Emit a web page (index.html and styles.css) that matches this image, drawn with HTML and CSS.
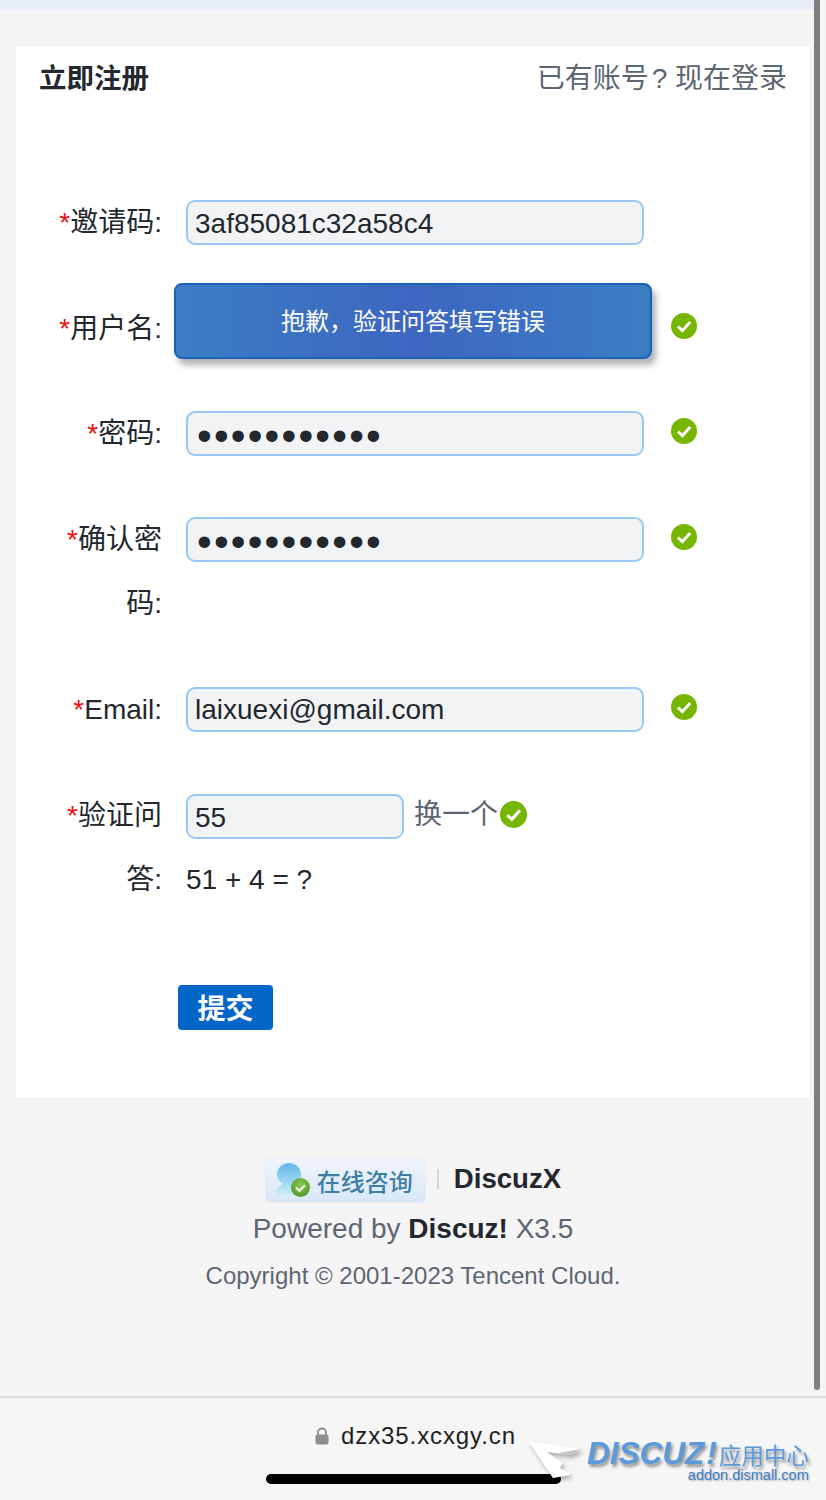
FILE: index.html
```html
<!DOCTYPE html>
<html lang="zh">
<head>
    <meta charset="utf-8">
    <title>立即注册</title>
    <link rel="stylesheet" href="styles.css">
</head>
<body>
    <div class="topbar"></div>
    <div class="scrollbar"></div>

    <form class="card">
        <div class="card-head">
            <h2 class="card-title">立即注册</h2>
            <a class="card-link">已有账号<span class="qm">?</span> 现在登录</a>
        </div>

        <div class="row">
            <label class="row-label"><span class="req">*</span>邀请码:</label>
            <input class="txt" type="text" value="3af85081c32a58c4">
        </div>
        <div class="row">
            <label class="row-label"><span class="req">*</span>用户名:</label>
            <input class="txt" type="text">
            <svg class="ok" viewBox="0 0 26 26"><circle cx="13" cy="13" r="13" fill="#76b500"/><path d="M7 13.5l4.4 4.2L19.2 9" fill="none" stroke="#fff" stroke-width="3"/></svg>
        </div>
        <div class="row">
            <label class="row-label"><span class="req">*</span>密码:</label>
            <input class="txt pw" type="password" value="12345678901">
            <svg class="ok" viewBox="0 0 26 26"><circle cx="13" cy="13" r="13" fill="#76b500"/><path d="M7 13.5l4.4 4.2L19.2 9" fill="none" stroke="#fff" stroke-width="3"/></svg>
        </div>
        <div class="row">
            <label class="row-label"><span class="req">*</span>确认密码:</label>
            <input class="txt pw" type="password" value="12345678901">
            <svg class="ok" viewBox="0 0 26 26"><circle cx="13" cy="13" r="13" fill="#76b500"/><path d="M7 13.5l4.4 4.2L19.2 9" fill="none" stroke="#fff" stroke-width="3"/></svg>
        </div>
        <div class="row">
            <label class="row-label"><span class="req">*</span>Email:</label>
            <input class="txt" type="text" value="laixuexi@gmail.com">
            <svg class="ok" viewBox="0 0 26 26"><circle cx="13" cy="13" r="13" fill="#76b500"/><path d="M7 13.5l4.4 4.2L19.2 9" fill="none" stroke="#fff" stroke-width="3"/></svg>
        </div>
        <div class="row row-captcha">
            <label class="row-label"><span class="req">*</span>验证问答:</label>
            <div class="captcha">
                <div class="captcha-line">
                    <input class="txt txt-short" type="text" value="55">
                    <a class="swap">换一个</a>
                    <svg class="ok ok-tight" viewBox="0 0 26 26"><circle cx="13" cy="13" r="13" fill="#76b500"/><path d="M7 13.5l4.4 4.2L19.2 9" fill="none" stroke="#fff" stroke-width="3"/></svg>
                </div>
                <div class="question">51 + 4 = ?</div>
            </div>
        </div>

        <button class="btn" type="button">提交</button>

        <div class="toast">抱歉，验证问答填写错误</div>
    </form>

    <div class="foot">
        <div class="foot-line">
            <span class="consult">
                <svg class="consult-icon" viewBox="0 0 36 36">
                    <defs>
                        <linearGradient id="head" x1="0" y1="0" x2="0" y2="1">
                            <stop offset="0" stop-color="#62b8e8"/>
                            <stop offset="0.6" stop-color="#a0daf0"/>
                            <stop offset="1" stop-color="#dbeff8"/>
                        </linearGradient>
                        <radialGradient id="tick" cx="0.5" cy="0.35" r="0.7">
                            <stop offset="0" stop-color="#8cc850"/>
                            <stop offset="1" stop-color="#4c9428"/>
                        </radialGradient>
                    </defs>
                    <path d="M14 0c7 0 12 5 12 12 0 4-2 7-4 9 4 1 8 3 10 5l-3 8H6C3 34 0 31 1 28c1-3 4-5 7-7-3-2-6-5-6-9C2 5 7 0 14 0z" fill="url(#head)"/>
                    <circle cx="25.5" cy="24.5" r="9.5" fill="url(#tick)"/>
                    <path d="M21 24.5l3.4 3.4 5.6-5.6" fill="none" stroke="#eaf6e0" stroke-width="2.2"/>
                </svg>
                <span class="consult-text">在线咨询</span>
            </span>
            <span class="foot-sep"></span>
            <b class="foot-name">DiscuzX</b>
        </div>
        <div class="powered">Powered by <b>Discuz!</b> X3.5</div>
        <div class="copy">Copyright © 2001-2023 Tencent Cloud.</div>
    </div>

    <div class="urlbar">
        <div class="url">
            <svg class="lock" viewBox="0 0 14 18"><path d="M3 8V5.5a4 4 0 0 1 8 0V8" fill="none" stroke="#8e8e92" stroke-width="1.8"/><rect x="0.5" y="7.5" width="13" height="10" rx="2" fill="#8e8e92"/></svg>
            <span>dzx35.xcxgy.cn</span>
        </div>
        <div class="home"></div>
    </div>

    <div class="mark">
        <svg class="mark-arrow" viewBox="0 0 56 40">
            <path d="M0 1l54 8-12 6-23-3 16 11-3 5 10 5v2l-17 3z" fill="#fff"/>
            <path d="M54 9L30 13l12 2z" fill="#c4c4c4"/>
        </svg>
        <div class="mark-body">
            <div class="mark-top"><span class="mark-logo">DISCUZ<i>!</i></span><span class="mark-cn">应用中心</span></div>
            <div class="mark-site">addon.dismall.com</div>
        </div>
    </div>
</body>
</html>
```

FILE: styles.css
```css
* {
    box-sizing: border-box;
}

html, body {
    margin: 0;
    padding: 0;
}

body {
    position: relative;
    width: 826px;
    height: 1500px;
    overflow: hidden;
    background-color: #f5f5f5;
    font-family: "Liberation Sans", "Noto Sans CJK SC", sans-serif;
    font-size: 28px;
    color: #23272e;
}

.topbar {
    height: 10px;
    margin-right: 12px;
    background-color: #e8eef6;
}

.scrollbar {
    position: absolute;
    top: 0;
    left: 814px;
    width: 6px;
    height: 1390px;
    border-radius: 0 0 3px 3px;
    background-color: #808080;
}

.card {
    position: relative;
    width: 794px;
    height: 1052px;
    margin: 36px 0 0 16px;
    padding: 0 23px;
    background-color: #fff;
}

.card-head {
    display: flex;
    justify-content: space-between;
    align-items: center;
    height: 60px;
    margin-bottom: 84px;
}

.card-title {
    margin: 0;
    font-size: 27.5px;
    font-weight: bold;
    color: #23272e;
}

.card-link {
    font-size: 28px;
    color: #5d6673;
}

.qm {
    margin-left: 3px;
}

.row {
    display: flex;
    align-items: flex-start;
    margin-bottom: 40.7px;
    line-height: 64px;
}

.row-captcha {
    margin-top: 41px;
}

.row-label {
    flex: none;
    width: 106px;
    margin: 0 24px 0 17px;
    padding-top: 1px;
    text-align: right;
}

.req {
    color: #f01010;
}

.txt {
    flex: none;
    width: 458px;
    height: 45px;
    margin-top: 10px;
    padding: 2px 7px 0;
    border: 2px solid #98c8f6;
    border-radius: 9px;
    outline: none;
    background-color: #f2f3f5;
    font-family: "Liberation Sans", sans-serif;
    font-size: 28px;
    color: #23272e;
}

.txt-short {
    width: 218px;
}

.pw {
    padding: 4px 0 0 9px;
    font-size: 42px;
    letter-spacing: 2.2px;
}

.ok {
    flex: none;
    width: 26px;
    height: 26px;
    margin: 17px 0 0 27px;
}

.ok-tight {
    width: 27px;
    height: 27px;
    margin: 0 0 4px 2px;
}

.captcha {
    flex: 1;
}

.captcha-line {
    display: flex;
    align-items: center;
}

.captcha-line .txt {
    margin-top: 0;
}

.swap {
    margin: 0 0 4px 10px;
    color: #5d6673;
}

.question {
    margin-top: -3px;
    color: #23272e;
}

.btn {
    display: block;
    width: 95px;
    height: 45px;
    margin: 73px 0 0 139px;
    padding: 0;
    border: none;
    border-radius: 4px;
    background-color: #0566c9;
    font-family: "Noto Sans CJK SC", sans-serif;
    font-size: 28px;
    font-weight: bold;
    color: #fff;
}

.toast {
    position: absolute;
    top: 237px;
    left: 158px;
    width: 478px;
    height: 76px;
    border: 2px solid #1a62b8;
    border-radius: 8px;
    background: linear-gradient(90deg, #3b7dc4, #3d66c0 50%, #3b7dc4);
    box-shadow: 4px 6px 6px rgba(0, 0, 0, 0.3);
    font-size: 24px;
    line-height: 74px;
    text-align: center;
    color: #fff;
}

.foot {
    margin-top: 60px;
    text-align: center;
}

.foot-line {
    display: flex;
    justify-content: center;
    align-items: center;
    height: 45px;
}

.consult {
    display: flex;
    align-items: center;
    width: 161px;
    height: 45px;
    padding-left: 9px;
    border: 1px solid #e6edf5;
    border-radius: 6px;
    background: linear-gradient(180deg, #f0f5fb, #d8e7f7);
}

.consult-icon {
    width: 36px;
    height: 36px;
}

.consult-text {
    margin-left: 6px;
    font-size: 24px;
    font-weight: 500;
    color: #3f7fa6;
}

.foot-sep {
    width: 2px;
    height: 20px;
    margin: 0 15px 4px 11px;
    background-color: #d8d8d8;
}

.foot-name {
    margin-bottom: 4px;
    font-size: 27.6px;
    color: #23272e;
}

.powered {
    margin-top: 3px;
    font-size: 28px;
    line-height: 46px;
    color: #5d6673;
}

.powered b {
    color: #23272e;
}

.copy {
    font-size: 24px;
    line-height: 48px;
    color: #5d6673;
}

.urlbar {
    position: absolute;
    left: 0;
    top: 1396px;
    width: 826px;
    height: 104px;
    border-top: 2px solid #dcdcdc;
    background-color: #f6f6f6;
}

.url {
    display: flex;
    justify-content: center;
    align-items: center;
    gap: 12px;
    height: 76px;
    padding-left: 5px;
    font-size: 24px;
    letter-spacing: 0.9px;
    color: #1e1e1e;
}

.lock {
    width: 14px;
    height: 18px;
}

.home {
    width: 295px;
    height: 10px;
    margin-left: 266px;
    border-radius: 5px;
    background-color: #000;
}

.mark {
    position: absolute;
    top: 1440px;
    left: 528px;
    display: flex;
}

.mark-arrow {
    flex: none;
    width: 56px;
    height: 40px;
    filter: drop-shadow(2px 3px 2px rgba(0, 0, 0, 0.3));
}

.mark-body {
    margin: -1px 0 0 3px;
}

.mark-top {
    display: flex;
    align-items: baseline;
    height: 28px;
    line-height: 28px;
    color: #5b9bdc;
    text-shadow: 2px 3px 3px rgba(60, 60, 60, 0.5);
}

.mark-logo {
    font-size: 31.5px;
    font-weight: bold;
    font-style: italic;
}

.mark-logo i {
    margin: 0 2px 0 2px;
}

.mark-cn {
    font-size: 22.5px;
}

.mark-site {
    font-size: 14.5px;
    line-height: 16px;
    text-align: right;
    color: #3f7fc4;
    text-shadow: 1px 1px 2px rgba(60, 60, 60, 0.4);
}
```
